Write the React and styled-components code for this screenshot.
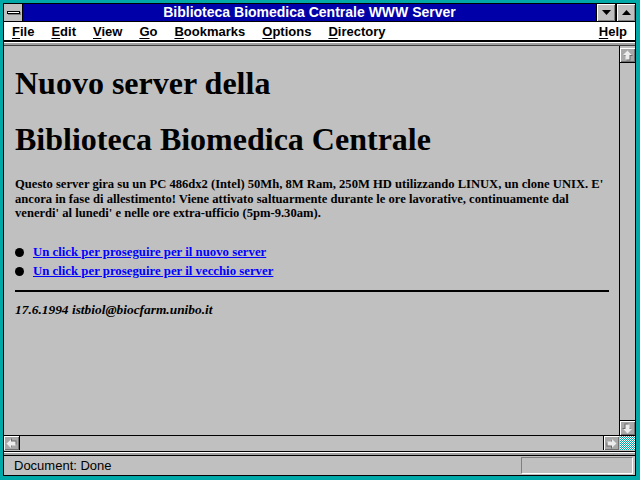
import React from "react";
import styled, { createGlobalStyle } from "styled-components";

const GlobalStyle = createGlobalStyle`
  html, body {
    margin: 0;
    padding: 0;
    background: #00a8a8;
  }
  * {
    box-sizing: border-box;
  }
`;

const MENU = ["File", "Edit", "View", "Go", "Bookmarks", "Options", "Directory"];

const LINKS = [
  "Un click per proseguire per il nuovo server",
  "Un click per proseguire per il vecchio server",
];

const Arrow = ({ dir }) => {
  const rot = { up: 0, right: 90, down: 180, left: 270 }[dir];
  return (
    <svg width="11" height="11" viewBox="0 0 11 11" style={{ transform: `rotate(${rot}deg)` }}>
      <path d="M6.5 1.5 L11 6 L8.5 6 L8.5 10.5 L4.5 10.5 L4.5 6 L2 6 Z" fill="#6a6a6a" />
      <path d="M5.5 0.5 L10 5 L7.5 5 L7.5 9.5 L3.5 9.5 L3.5 5 L1 5 Z" fill="#ececec" />
    </svg>
  );
};

const Triangle = ({ up }) => (
  <svg width="9" height="5" viewBox="0 0 9 5">
    <path d={up ? "M0 5 L4.5 0 L9 5 Z" : "M0 0 L4.5 5 L9 0 Z"} fill="#000" />
  </svg>
);

const App = () => {
  return (
    <>
      <GlobalStyle />
      <Window>
        <Frame>
          <TitleBar>
            <SysBox>
              <SysBar />
            </SysBox>
            <Caption>Biblioteca Biomedica Centrale WWW Server</Caption>
            <CapButton>
              <Triangle />
            </CapButton>
            <CapButton last>
              <Triangle up />
            </CapButton>
          </TitleBar>

          <MenuBar>
            {MENU.map((m) => (
              <MenuItem key={m}>
                <u>{m[0]}</u>
                {m.slice(1)}
              </MenuItem>
            ))}
            <MenuSpacer />
            <MenuItem last>
              <u>H</u>elp
            </MenuItem>
          </MenuBar>

          <ToolSeparator />

          <Main>
            <Content>
              <Heading>Nuovo server della</Heading>
              <Heading>Biblioteca Biomedica Centrale</Heading>
              <Para>
                Questo server gira su un PC 486dx2 (Intel) 50Mh, 8M Ram, 250M HD utilizzando LINUX, un clone UNIX. E'
                <br />
                ancora in fase di allestimento! Viene attivato saltuarmente durante le ore lavorative, continuamente dal
                <br />
                venerdi' al lunedi' e nelle ore extra-ufficio (5pm-9.30am).
              </Para>
              <LinkList>
                {LINKS.map((l) => (
                  <LinkItem key={l}>
                    <Bullet />
                    <PageLink href="#">{l}</PageLink>
                  </LinkItem>
                ))}
              </LinkList>
              <Rule />
              <Address>17.6.1994 istbiol@biocfarm.unibo.it</Address>
            </Content>

            <VScroll>
              <ScrollButton>
                <Arrow dir="up" />
              </ScrollButton>
              <VTrack />
              <ScrollButton>
                <Arrow dir="down" />
              </ScrollButton>
            </VScroll>
          </Main>

          <HScroll>
            <ScrollButton>
              <Arrow dir="left" />
            </ScrollButton>
            <HTrack />
            <ScrollButton>
              <Arrow dir="right" />
            </ScrollButton>
            <Corner />
          </HScroll>

          <StatusSeparator />

          <StatusBar>
            <StatusText>Document: Done</StatusText>
            <StatusField />
          </StatusBar>
        </Frame>
      </Window>
    </>
  );
};

export default App;

const Window = styled.div`
  width: 640px;
  height: 480px;
  padding: 3px 4px 4px 3px;
  background: #00a8a8;
`;

const Frame = styled.div`
  width: 100%;
  height: 100%;
  border: 1px solid #000;
  display: flex;
  flex-direction: column;
  background: #c0c0c0;
  overflow: hidden;
`;

const TitleBar = styled.div`
  height: 18px;
  flex: none;
  display: flex;
  align-items: stretch;
  background: #0000a8;
  border-bottom: 1px solid #000;
`;

const SysBox = styled.div`
  width: 19px;
  background: #c0c0c0;
  border-right: 1px solid #000;
  display: flex;
  align-items: center;
  justify-content: center;
`;

const SysBar = styled.div`
  width: 13px;
  height: 3px;
  background: #fff;
  border: 1px solid #000;
  box-shadow: 1px 1px 0 #808080;
`;

const Caption = styled.div`
  flex: 1;
  text-align: center;
  color: #fff;
  font-family: "Liberation Sans", Arial, sans-serif;
  font-weight: bold;
  font-size: 14px;
  line-height: 17px;
`;

const CapButton = styled.div`
  width: 19px;
  background: #c0c0c0;
  border-left: 1px solid #000;
  margin-left: ${(p) => (p.last ? "1px" : "0")};
  box-shadow: inset 1px 1px 0 #fff, inset -1px -1px 0 #808080;
  display: flex;
  align-items: center;
  justify-content: center;
`;

const MenuBar = styled.div`
  height: 20px;
  flex: none;
  display: flex;
  align-items: center;
  background: #fff;
  border-bottom: 2px solid #000;
`;

const MenuItem = styled.div`
  font-family: "Liberation Sans", Arial, sans-serif;
  font-weight: bold;
  font-size: 13px;
  padding: 0 8px;
  color: #000;
  margin-right: ${(p) => (p.last ? "0" : "1px")};

  u {
    text-underline-offset: 2px;
  }
`;

const MenuSpacer = styled.div`
  flex: 1;
`;

const ToolSeparator = styled.div`
  height: 4px;
  flex: none;
  border-top: 1px solid #fff;
  border-bottom: 1px solid #404040;
  background: #a0a0a0;
`;

const Main = styled.div`
  flex: 1;
  min-height: 0;
  display: flex;
`;

const Content = styled.div`
  flex: 1;
  padding: 19px 10px 0 11px;
  font-family: "Liberation Serif", "Times New Roman", serif;
  font-weight: bold;
  color: #000;
`;

const Heading = styled.h1`
  font-size: 32px;
  line-height: 36px;
  margin: 0 0 20px 0;
`;

const Para = styled.p`
  font-size: 12.6px;
  line-height: 14.6px;
  margin: 2px 0 0 0;
  white-space: nowrap;
`;

const LinkList = styled.ul`
  list-style: none;
  margin: 22px 0 0 0;
  padding: 0;
`;

const LinkItem = styled.li`
  display: flex;
  align-items: center;
  height: 19px;
  font-size: 12.8px;
`;

const Bullet = styled.span`
  width: 9px;
  height: 9px;
  border-radius: 50%;
  background: #000;
  margin-right: 9px;
  flex: none;
`;

const PageLink = styled.a`
  color: #0000ff;
  text-decoration: underline;
`;

const Rule = styled.hr`
  margin: 9px 0 0 0;
  border: none;
  border-top: 2px solid #000;
  height: 0;
`;

const Address = styled.address`
  font-style: italic;
  font-size: 13.4px;
  margin-top: 10px;
`;

const VScroll = styled.div`
  width: 16px;
  flex: none;
  border-left: 1px solid #000;
  display: flex;
  flex-direction: column;
  padding-top: 2px;
`;

const VTrack = styled.div`
  flex: 1;
  border-top: 1px solid #000;
  border-bottom: 1px solid #000;
`;

const ScrollButton = styled.div`
  width: 15px;
  height: 14px;
  flex: none;
  background: #a8a8a8;
  box-shadow: inset 1px 1px 0 #fff, inset -1px -1px 0 #707070;
  display: flex;
  align-items: center;
  justify-content: center;
`;

const HScroll = styled.div`
  height: 16px;
  flex: none;
  display: flex;
  align-items: stretch;
  border-top: 1px solid #000;
  padding-bottom: 1px;
`;

const HTrack = styled.div`
  flex: 1;
  border-left: 1px solid #000;
  border-right: 1px solid #000;
`;

const Corner = styled.div`
  width: 15px;
  margin-left: 1px;
  background: repeating-conic-gradient(#00a8a8 0 25%, #ffffff 0 50%) 0 0 / 2px 2px;
`;

const StatusSeparator = styled.div`
  height: 5px;
  flex: none;
  border-top: 1px solid #000;
  border-bottom: 1px solid #000;
  background: linear-gradient(#fff 0 1px, #a0a0a0 1px);
`;

const StatusBar = styled.div`
  flex: none;
  height: 19px;
  display: flex;
  align-items: center;
  padding: 1px 2px 1px 10px;
`;

const StatusText = styled.div`
  flex: 1;
  font-family: "Liberation Sans", Arial, sans-serif;
  font-size: 13px;
  color: #000;
`;

const StatusField = styled.div`
  width: 112px;
  height: 17px;
  border-top: 1px solid #808080;
  border-left: 1px solid #808080;
  border-right: 1px solid #fff;
  border-bottom: 1px solid #fff;
`;
